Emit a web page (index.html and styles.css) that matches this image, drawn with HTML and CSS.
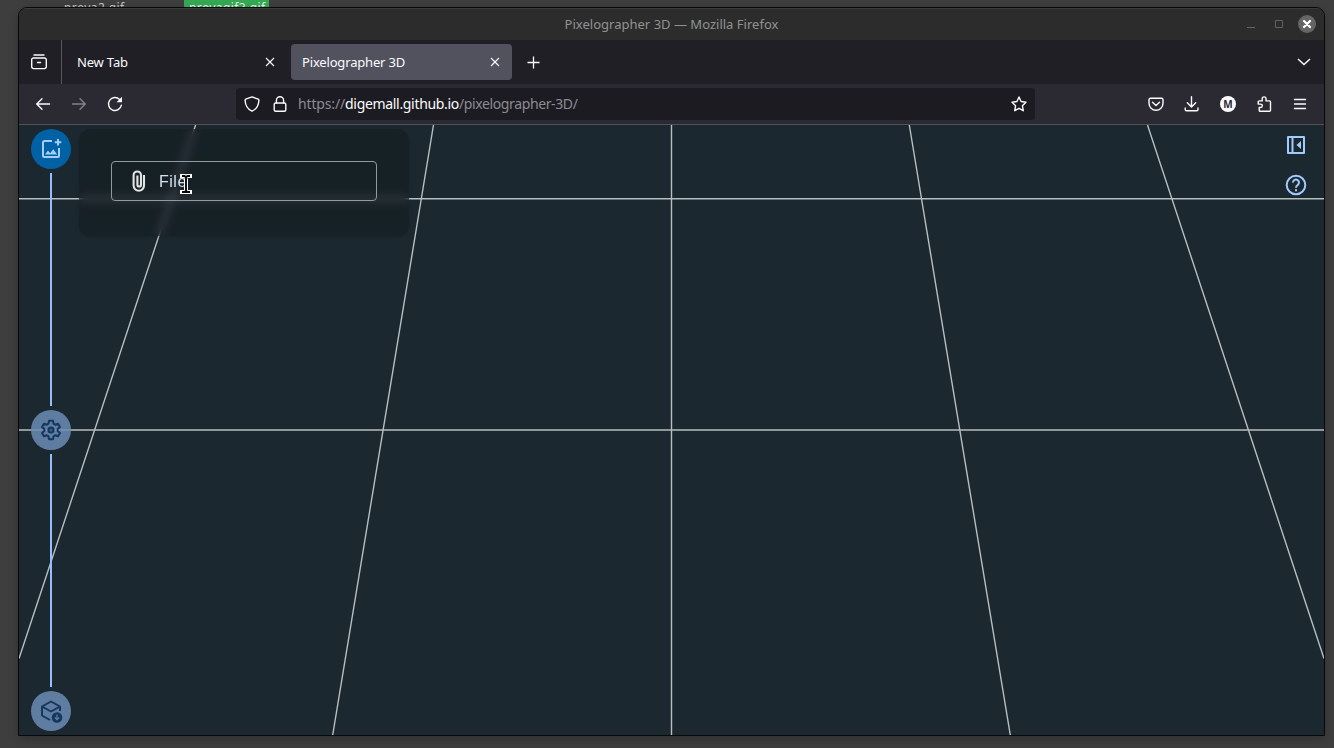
FILE: index.html
```html
<!DOCTYPE html>
<html lang="en">
<head>
<meta charset="utf-8">
<title>Pixelographer 3D</title>
<link rel="stylesheet" href="styles.css">
</head>
<body>
<div class="desktop-files"><span class="file">prova2.gif</span><span class="file selected">provagif3.gif</span></div>
<div class="window">
  <header class="titlebar">
    <span class="window-title">Pixelographer 3D — Mozilla Firefox</span>
    <div class="window-controls">
      <svg width="10" height="10"><path d="M1 8.500h8" stroke="#666"/></svg>
      <svg width="10" height="10"><path d="M1.500 1.500h7v7h-7z" fill="none" stroke="#606060"/></svg>
      <svg width="18" height="18"><circle cx="9" cy="9" r="9" fill="#656565"/><path d="M6 6l6 6M12 6l-6 6" stroke="#fff" stroke-width="2.300" stroke-linecap="round"/></svg>
    </div>
  </header>

  <nav class="tabs">
    <div class="recent"><svg class="ic" viewBox="0 0 16 16"><path d="M3 1h10M2.500 4h11a1.800 1.800 0 0 1 1.800 1.800v7a1.800 1.800 0 0 1-1.800 1.800h-11A1.800 1.800 0 0 1 .7 12.800v-7A1.800 1.800 0 0 1 2.500 4zM6.500 8.500h3"/></svg></div>
    <div class="tab"><span>New Tab</span><svg class="close" viewBox="0 0 10 10"><path d="M1 1l8 8M9 1L1 9"/></svg></div>
    <div class="tab active"><span>Pixelographer 3D</span><svg class="close" viewBox="0 0 10 10"><path d="M1 1l8 8M9 1L1 9"/></svg></div>
    <svg class="plus" viewBox="0 0 14 14"><path d="M6.500 1.500v12M.5 7.500h12"/></svg>
    <svg class="chevron" viewBox="0 0 14 8"><path d="M1 1l6 5.500L13 1"/></svg>
  </nav>

  <div class="toolbar">
    <div class="history">
      <svg class="ic" viewBox="0 0 16 16"><path d="M14.500 8H1.700M7 2.700L1.700 8 7 13.300"/></svg>
      <svg class="ic dim" viewBox="0 0 16 16"><path d="M1.500 8h12.800M9 2.700L14.300 8 9 13.300"/></svg>
      <svg class="ic" viewBox="0 0 16 16"><path d="M14.400 9.200A6.500 6.500 0 1 1 12.600 3.400"/><path d="M15 .8v5.500H9.500z" fill="#fbfbfe" stroke="none"/></svg>
    </div>
    <div class="address">
      <svg class="ic" viewBox="0 0 16 16"><path d="M8 .9L14.300 3.200Q15 3.500 14.900 4.500C14.600 9.600 12 13.400 8 15.200 4 13.400 1.400 9.600 1.100 4.500Q1 3.500 1.700 3.200z"/></svg>
      <svg class="ic" viewBox="0 0 16 16"><rect x="2.200" y="7" width="11.600" height="8.300" rx="1.500"/><path d="M4.400 7V4.400a3.600 3.600 0 0 1 7.200 0V7"/></svg>
      <span class="url"><span class="scheme">https://</span><span class="domain">digemall.github.io</span><span class="path">/pixelographer-3D/</span></span>
      <svg class="ic star" viewBox="0 0 16 16"><path d="M8 1l2.100 4.500 4.900.7-3.600 3.500.9 5L8 12.300l-4.300 2.400.9-5L1 6.200l4.900-.7z"/></svg>
    </div>
    <div class="actions">
      <svg class="ic" viewBox="0 0 16 16"><path d="M2.500 2.200h11a1.500 1.500 0 0 1 1.500 1.500v3.500a7 7 0 0 1-14 0V3.700a1.500 1.500 0 0 1 1.500-1.500z"/><path d="M4.500 6.300L8 9.500l3.500-3.200"/></svg>
      <svg class="ic" viewBox="0 0 16 16"><path d="M7.500 .8v10M3.300 6.700L7.500 11l4.200-4.300M1.200 12v1.500a1.300 1.300 0 0 0 1.300 1.300h10.200a1.300 1.300 0 0 0 1.300-1.300V12"/></svg>
      <span class="avatar">M</span>
      <svg class="ic" viewBox="0 0 16 16"><path d="M3.200 4.900h3V2.800a1.900 1.900 0 0 1 3.800 0v2.100h3.500a1 1 0 0 1 1 1v8.300a1 1 0 0 1-1 1H4.200a1 1 0 0 1-1-1v-2.700h1.400a1.700 1.700 0 0 0 0-3.400H2.200V5.900a1 1 0 0 1 1-1z"/></svg>
      <svg class="ic" viewBox="0 0 16 16"><path d="M2.500 3.500h11M2.500 8h11M2.500 12.500h11"/></svg>
    </div>
  </div>

  <main class="stage">
    <svg class="grid-lines" width="1305" height="610" viewBox="19 125 1305 610">
      <path d="M19 198.700H1324M19 430H1324M671.500 125V735M195.600 125L19 658.500M433.500 125L332.700 735M909.300 125L1010.300 735M1147.500 125L1324 658.500"/>
    </svg>
    <div class="workspace">
      <div class="stepper">
        <div class="step current"><svg viewBox="0 0 24 24"><path d="M13 4H5.500A1.500 1.500 0 0 0 4 5.500v13A1.500 1.500 0 0 0 5.500 20h13a1.500 1.500 0 0 0 1.500-1.500V11" fill="none" stroke="#a5cdff" stroke-width="2"/><path d="M19 2v6.500M15.800 5.200h6.500" stroke="#a5cdff" stroke-width="2"/><path d="M6 17.500l3-4 2.200 2.700 3-4 4 5.300z" fill="#a5cdff"/></svg></div>
        <i class="rail"></i>
        <div class="step"><svg viewBox="0 0 24 24" fill="none" stroke="#16375c" stroke-width="2"><path stroke-linejoin="round" d="M10 2.800h4l.5 2.900 1.700 1 2.800-1 2 3.400-2.300 1.900v2l2.300 1.900-2 3.400-2.800-1-1.700 1-.5 2.900h-4l-.5-2.900-1.700-1-2.800 1-2-3.400 2.300-1.900v-2L3 9.100l2-3.400 2.800 1 1.700-1z"/><circle cx="12" cy="12" r="2.600" fill="#3c5d87"/></svg></div>
        <i class="rail"></i>
        <div class="step"><svg viewBox="0 0 24 24" fill="none" stroke="#16375c" stroke-width="2"><path stroke-linejoin="round" d="M11 21l-8-4.500v-9L12 2.500l9 5V12M3 7.500l9 5 9-5"/><circle cx="18" cy="18.500" r="5.300" fill="#16375c" stroke="none"/><path d="M18 15.500v5M15.800 18.500l2.200 2.200 2.200-2.200" stroke="#5f7ca8" stroke-width="1.200"/></svg></div>
      </div>
      <section class="panel">
        <div class="file-input">
          <svg width="16" height="22" viewBox="0 0 16 22"><path d="M13 5v10.500a5.200 5.200 0 0 1-10.400 0V5.200a3.700 3.700 0 0 1 7.400 0v9.500a1.800 1.800 0 0 1-3.600 0V5.500" fill="none" stroke="#e3e4e5" stroke-width="2.100"/></svg>
          <span>File</span>
          <svg class="cursor" width="12" height="20" viewBox="0 0 12 20"><path d="M2 2h2.500L6 3.300 7.500 2H10M6 3v14M2 18h2.500L6 16.700 7.500 18H10" fill="none" stroke="#fff" stroke-width="4" stroke-linecap="square"/><path d="M2 2h2.500L6 3.300 7.500 2H10M6 3v14M2 18h2.500L6 16.700 7.500 18H10" fill="none" stroke="#080808" stroke-width="1.900"/></svg>
        </div>
      </section>
      <div class="side-tools">
        <svg viewBox="0 0 24 24"><path d="M4 4h16v16H4zM8.500 4v16" fill="none" stroke="#a0cbff" stroke-width="2" stroke-linejoin="round"/><path d="M17 8v8l-4.500-4z" fill="#a0cbff"/></svg>
        <svg viewBox="0 0 24 24" fill="none" stroke="#a0cbff" stroke-width="2"><circle cx="12" cy="12" r="9.300"/><path d="M9 9.600a3 3 0 1 1 4.800 2.300C12.600 12.800 12 13.200 12 14.700M12 16.300v2"/></svg>
      </div>
    </div>
  </main>
</div>
</body>
</html>
```
FILE: styles.css
```css
* { box-sizing: border-box; }
body {
  margin: 0;
  width: 1334px;
  height: 748px;
  padding: 7px 9px 12px 18px;
  overflow: hidden;
  background: #3e3e3e;
  font-family: "Noto Sans", "Open Sans", sans-serif;
  color: #fbfbfe;
}
svg { display: block; flex: none; }
.desktop-files {
  position: absolute;
  top: -2px;
  left: 59px;
  display: flex;
  gap: 54px;
  font-size: 12px;
  line-height: 20px;
  color: #c5c5c5;
}
.file { width: 71px; padding: 0 5px; letter-spacing: .4px; }
.file.selected { width: 85px; background: #35a854; color: #e8f5eb; }
.window {
  position: relative;
  width: 1307px;
  height: 729px;
  overflow: hidden;
  border: 1px solid #090909;
  border-radius: 9px 9px 0 0;
  background: #2b2a33;
  box-shadow: 0 3px 10px rgba(0, 0, 0, .22);
}
.titlebar {
  display: grid;
  grid-template-columns: 1fr auto 1fr;
  align-items: center;
  height: 32px;
  background: #2c2c2c;
  box-shadow: inset 0 1px #3b3b3b;
}
.window-title { grid-column: 2; font-size: 13px; letter-spacing: .01px; color: #929292; }
.window-controls { display: flex; align-items: center; justify-content: flex-end; gap: 18px; padding-right: 8px; }
.window-controls svg:last-child { margin-left: -4px; }
.tabs { display: flex; align-items: center; height: 44px; background: #1f1f25; }
.recent { display: flex; align-items: center; width: 43px; height: 44px; padding-left: 12px; border-right: 1px solid #55555f; }
.ic { width: 16px; height: 16px; fill: none; stroke: #fbfbfe; stroke-width: 1.4; stroke-linecap: round; stroke-linejoin: round; }
.dim { opacity: .42; }
.tab {
  display: flex;
  align-items: center;
  justify-content: space-between;
  width: 221px;
  height: 36px;
  padding: 0 12px 0 11px;
  border-radius: 4px;
  font-size: 13px;
  letter-spacing: -.17px;
}
.tab:not(.active) { margin: 0 4px; }
.active { background: #52525e; }
.close { width: 10px; height: 10px; fill: none; stroke: #fbfbfe; stroke-width: 1.1; }
.plus { width: 14px; height: 14px; margin-left: 15px; fill: none; stroke: #fbfbfe; stroke-width: 1.3; }
.chevron { width: 14px; height: 8px; margin: 0 13px 0 auto; fill: none; stroke: #fbfbfe; stroke-width: 1.4; }
.toolbar { display: flex; align-items: center; height: 41px; border-bottom: 1px solid #51515b; }
.history { display: flex; gap: 20px; width: 217px; padding-left: 16px; }
.address {
  display: flex;
  align-items: center;
  gap: 12px;
  width: 799px;
  height: 32px;
  padding: 0 8px;
  border-radius: 4px;
  background: #1c1b22;
}
.url { position: relative; top: -1px; margin-left: -2px; font-size: 14px; white-space: nowrap; color: #8c8b91; }
.scheme { letter-spacing: -.15px; }
.domain { color: #fbfbfe; letter-spacing: -.32px; }
.path { letter-spacing: -.38px; }
.star { margin-left: auto; }
.actions { display: flex; gap: 20px; margin: 0 16px 0 auto; }
.avatar {
  width: 16px;
  height: 16px;
  border-radius: 50%;
  background: #fbfbfe;
  color: #2b2a33;
  font-size: 10px;
  font-weight: 700;
  line-height: 16px;
  text-align: center;
}
.stage { position: relative; height: 610px; background: #1b282f; }
.grid-lines { position: absolute; inset: 0; fill: none; stroke: #b8bdbf; stroke-width: 1.4; }
.workspace { position: relative; display: flex; align-items: flex-start; height: 610px; padding: 4px 16px 4px 12px; }
.stepper { display: flex; flex-direction: column; align-items: center; gap: 4px; width: 40px; height: 602px; }
.step { display: flex; align-items: center; justify-content: center; width: 40px; height: 40px; border-radius: 50%; background: rgba(107, 138, 181, .86); }
.step svg { width: 24px; height: 24px; }
.step.current { background: #0061a4; }
.rail { width: 2px; flex: 1; background: #94bfff; }
.panel {
  width: 330px;
  height: 107px;
  margin-left: 8px;
  padding: 32px;
  border-radius: 12px;
  background: rgba(18, 25, 29, .45);
  backdrop-filter: blur(4.5px);
  box-shadow: 0 1px 3px rgba(0, 0, 0, .16);
}
.file-input {
  position: relative;
  display: flex;
  align-items: center;
  gap: 12px;
  width: 266px;
  height: 40px;
  padding-left: 19px;
  border: 1px solid #929a9f;
  border-radius: 4px;
  color: #d5e0ed;
  font: 16px/24px "Liberation Sans", sans-serif;
  letter-spacing: .5px;
}
.file-input span { padding-top: 2px; }
.cursor { position: absolute; left: 68px; top: 12px; }
.side-tools { display: flex; flex-direction: column; gap: 16px; margin-left: auto; padding-top: 4px; }
.side-tools svg { width: 24px; height: 24px; }
```
